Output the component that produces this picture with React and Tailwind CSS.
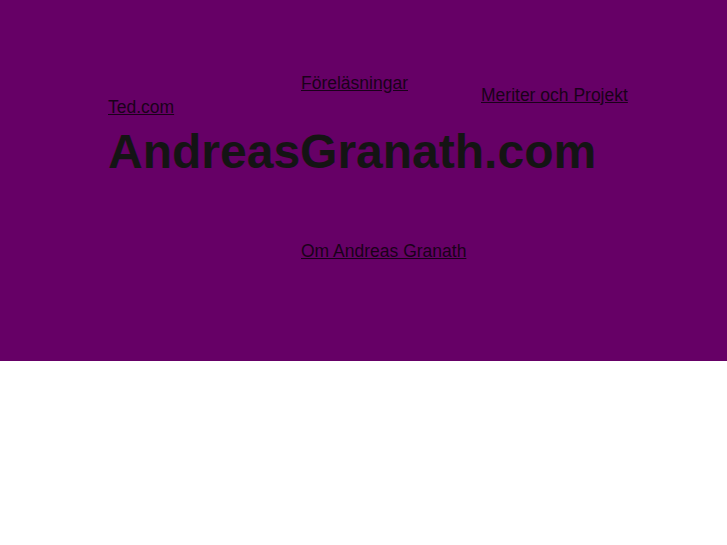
export default function App() {
  return (
    <div className="w-full min-h-[545px] bg-white font-['Liberation_Sans',Arial,sans-serif]">
      <header className="h-[361px] bg-[#660066] pl-[108px] pt-[73px]">
        <nav className="flex items-start text-[17.5px] leading-[20px] text-[#1a001a]">
          <a href="#" className="w-[193px] mt-[24px] underline">Ted.com</a>
          <a href="#" className="w-[180px] underline">Föreläsningar</a>
          <a href="#" className="mt-[12px] underline">Meriter och Projekt</a>
        </nav>
        <h1 className="mt-[7px] text-[48px] leading-[56px] font-bold text-[#141414]">
          AndreasGranath.com
        </h1>
        <a href="#" className="block w-max ml-[193px] mt-[61px] text-[17.5px] leading-[20px] text-[#1a001a] underline">
          Om Andreas Granath
        </a>
      </header>
    </div>
  );
}
